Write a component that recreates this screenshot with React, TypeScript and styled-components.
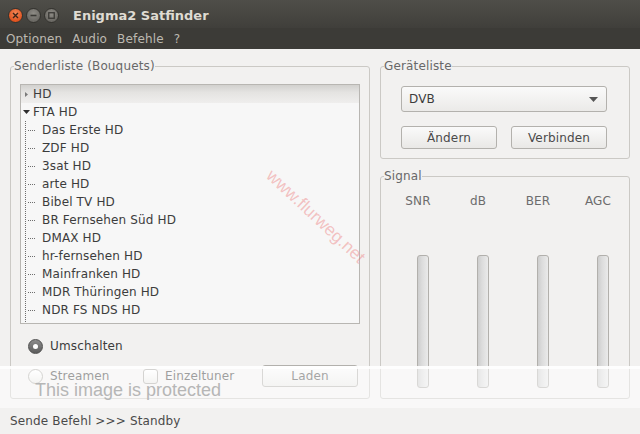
import React from "react";
import styled, { createGlobalStyle } from "styled-components";

const Global = createGlobalStyle`
  html, body { margin: 0; padding: 0; background: #f2f1f0; }
  body {
    width: 640px; height: 434px; overflow: hidden;
    font-family: "DejaVu Sans", "Noto Sans", sans-serif;
    font-size: 12px; letter-spacing: 0.15px; color: #3c3c3c;
  }
`;

const Window = styled.div`
  position: relative;
  width: 640px;
  height: 434px;
  background: #f2f1f0;
  display: flex;
  flex-direction: column;
  overflow: hidden;
`;

const TitleBar = styled.div`
  flex: none;
  height: 28px;
  box-sizing: border-box;
  padding: 2px 0 0 8px;
  display: flex;
  align-items: center;
  gap: 3px;
  background: linear-gradient(#4f4e49, #403f3b);
`;

const WinButton = styled.span<{ $kind: "close" | "min" | "max" }>`
  width: 15px;
  height: 15px;
  border-radius: 50%;
  display: flex;
  align-items: center;
  justify-content: center;
  box-sizing: border-box;
  border: 1px solid #33322e;
  background: ${(p) =>
    p.$kind === "close"
      ? "radial-gradient(circle at 50% 35%, #f58a5a, #e0531f 70%)"
      : "radial-gradient(circle at 50% 35%, #8e8c86, #6b6964 70%)"};
  margin-right: ${(p) => (p.$kind === "max" ? "11px" : "0")};
`;

const Title = styled.span`
  font-family: "DejaVu Sans", sans-serif;
  font-weight: bold;
  font-size: 13px;
  letter-spacing: 0;
  color: #dfdbd2;
`;

const MenuBar = styled.div`
  flex: none;
  height: 21px;
  padding-left: 1px;
  display: flex;
  align-items: center;
  background: #3c3b37;
`;

const MenuItem = styled.span`
  padding: 0 5px;
  color: #bdb9b1;
  font-size: 12px;
`;

const Content = styled.div`
  flex: none;
  display: flex;
  gap: 10px;
  padding: 10px;
`;

const Frame = styled.fieldset<{ $w: number; $h: number }>`
  margin: 0;
  min-width: 0;
  box-sizing: border-box;
  width: ${(p) => p.$w}px;
  height: ${(p) => p.$h}px;
  border: 1px solid #cbc9c5;
  border-radius: 3px;
  padding: 0;
`;

const FrameBody = styled.div<{ $pad: string }>`
  padding: ${(p) => p.$pad};
  display: flex;
  flex-direction: column;
  align-items: flex-start;
`;

const Legend = styled.legend`
  padding: 0;
  margin-left: 3px;
  font-size: 12px;
  line-height: 14px;
  color: #686868;
`;

const Tree = styled.div`
  width: 340px;
  height: 240px;
  box-sizing: border-box;
  border: 1px solid #b8b6b2;
  background: #f7f7f7;
  overflow: hidden;
  flex: none;
`;

const Row = styled.div<{ $selected?: boolean }>`
  height: 18px;
  display: flex;
  align-items: center;
  white-space: nowrap;
  color: #3c3c3c;
  background: ${(p) =>
    p.$selected ? "linear-gradient(#d2d1ce, #e4e3e1 40%, #efeeed)" : "transparent"};
`;

const Expander = styled.span`
  width: 12px;
  height: 18px;
  display: flex;
  align-items: center;
  justify-content: center;
  padding-right: 1px;
  box-sizing: border-box;
`;

const Guide = styled.svg`
  width: 21px;
  height: 18px;
  flex: none;
  display: block;
`;

const Options = styled.div`
  display: flex;
  flex-direction: column;
  gap: 10px;
  margin-top: 14px;
  padding-left: 8px;
`;

const OptionRow = styled.div`
  display: grid;
  grid-template-columns: 115px 119px 96px;
  align-items: center;
  height: 24px;
`;

const Choice = styled.label`
  display: flex;
  align-items: center;
  gap: 7px;
  height: 16px;
  color: #3c3c3c;
`;

const Radio = styled.span<{ $checked?: boolean }>`
  width: 15px;
  height: 15px;
  box-sizing: border-box;
  border-radius: 50%;
  display: flex;
  align-items: center;
  justify-content: center;
  border: 1px solid ${(p) => (p.$checked ? "#4f4f4f" : "#a9a7a3")};
  background: ${(p) =>
    p.$checked ? "linear-gradient(#8c8c8c, #5c5c5c)" : "linear-gradient(#ffffff, #e9e8e6)"};
`;

const Dot = styled.span`
  width: 5px;
  height: 5px;
  border-radius: 50%;
  background: #ffffff;
`;

const Check = styled.span`
  width: 15px;
  height: 15px;
  box-sizing: border-box;
  border-radius: 3px;
  border: 1px solid #a9a7a3;
  background: linear-gradient(#ffffff, #e9e8e6);
`;

const Button = styled.button<{ $h?: number }>`
  height: ${(p) => p.$h ?? 23}px;
  box-sizing: border-box;
  border: 1px solid #b3b1ad;
  border-radius: 3px;
  background: linear-gradient(#fafafa, #e9e8e6);
  font-family: "DejaVu Sans", sans-serif;
  font-size: 12px;
  letter-spacing: 0.15px;
  color: #4a4a4a;
  padding: 0;
`;

const RightCol = styled.div`
  display: flex;
  flex-direction: column;
  gap: 10px;
`;

const Combo = styled.div`
  width: 206px;
  height: 26px;
  box-sizing: border-box;
  border: 1px solid #b3b1ad;
  border-radius: 3px;
  background: linear-gradient(#fafafa, #ebeae8);
  display: flex;
  align-items: center;
  justify-content: space-between;
  padding: 0 8px 0 7px;
  color: #3c3c3c;
`;

const ButtonPair = styled.div`
  display: grid;
  grid-template-columns: 96px 96px;
  gap: 14px;
  margin-top: 14px;
`;

const SignalGrid = styled.div`
  display: grid;
  grid-template-columns: repeat(4, 60px);
`;

const SignalCol = styled.div`
  display: flex;
  flex-direction: column;
  align-items: flex-start;
`;

const SignalLabel = styled.span`
  width: 60px;
  text-align: center;
  line-height: 14px;
  color: #6c6c6c;
`;

const Bar = styled.div`
  margin: 47px 0 0 29px;
  width: 12px;
  height: 133px;
  box-sizing: border-box;
  border: 1px solid #b2b0ac;
  border-radius: 3px;
  background: linear-gradient(to right, #cdcdcd, #dcdcdc 40%, #eaeaea);
`;

const StatusBar = styled.div`
  flex: none;
  height: 25px;
  box-sizing: border-box;
  padding: 5px 0 0 10px;
  line-height: 14px;
  color: #4a4a4a;
`;

const Watermark = styled.span`
  position: absolute;
  left: 252px;
  top: 206px;
  transform: rotate(43deg);
  font-family: "Liberation Sans", sans-serif;
  font-size: 17.5px;
  letter-spacing: 0;
  color: rgba(235, 110, 110, 0.4);
  white-space: nowrap;
`;

const Band = styled.div`
  position: absolute;
  left: 0;
  right: 0;
  top: 366px;
  height: 42px;
  box-sizing: border-box;
  border-top: 3px solid rgba(255, 255, 255, 0.85);
  background: rgba(255, 255, 255, 0.5);
  padding: 11px 0 0 35px;
  font-family: "Liberation Sans", sans-serif;
  font-size: 18px;
  letter-spacing: 0;
  line-height: 20px;
  color: #b6b6b6;
`;

const channels = [
  "Das Erste HD",
  "ZDF HD",
  "3sat HD",
  "arte HD",
  "Bibel TV HD",
  "BR Fernsehen Süd HD",
  "DMAX HD",
  "hr-fernsehen HD",
  "Mainfranken HD",
  "MDR Thüringen HD",
  "NDR FS NDS HD",
];

const TreeGuide = () => (
  <Guide viewBox="0 0 21 18">
    <line x1="4.5" y1="0" x2="4.5" y2="18" stroke="#6e6e6e" strokeWidth="1" strokeDasharray="1 1" />
    <line x1="7" y1="9.5" x2="14" y2="9.5" stroke="#6e6e6e" strokeWidth="1" strokeDasharray="1 1" />
  </Guide>
);

export default function App() {
  return (
    <Window>
      <Global />
      <TitleBar>
        <WinButton $kind="close">
          <svg width="7" height="7" viewBox="0 0 7 7">
            <path d="M1 1 L6 6 M6 1 L1 6" stroke="#3b2418" strokeWidth="1.4" />
          </svg>
        </WinButton>
        <WinButton $kind="min">
          <svg width="7" height="7" viewBox="0 0 7 7">
            <path d="M0.5 3.5 H6.5" stroke="#3a3935" strokeWidth="1.6" />
          </svg>
        </WinButton>
        <WinButton $kind="max">
          <svg width="7" height="7" viewBox="0 0 7 7">
            <rect x="0.75" y="0.75" width="5.5" height="5.5" fill="none" stroke="#3a3935" strokeWidth="1.3" />
          </svg>
        </WinButton>
        <Title>Enigma2 Satfinder</Title>
      </TitleBar>
      <MenuBar>
        <MenuItem>Optionen</MenuItem>
        <MenuItem>Audio</MenuItem>
        <MenuItem>Befehle</MenuItem>
        <MenuItem>?</MenuItem>
      </MenuBar>
      <Content>
        <Frame $w={360} $h={340}>
          <Legend>Senderliste (Bouquets)</Legend>
          <FrameBody $pad="11px 9px 0 9px">
            <Tree>
              <Row $selected>
                <Expander>
                  <svg width="3" height="5" viewBox="0 0 3 5">
                    <path d="M0 0 L3 2.5 L0 5 Z" fill="#7a7a7a" />
                  </svg>
                </Expander>
                HD
              </Row>
              <Row>
                <Expander>
                  <svg width="7" height="4" viewBox="0 0 7 4">
                    <path d="M0 0 H7 L3.5 4 Z" fill="#2e2e2e" />
                  </svg>
                </Expander>
                FTA HD
              </Row>
              {channels.map((c) => (
                <Row key={c}>
                  <TreeGuide />
                  {c}
                </Row>
              ))}
              <Row>
                <TreeGuide />
              </Row>
            </Tree>
            <Options>
              <Choice>
                <Radio $checked>
                  <Dot />
                </Radio>
                Umschalten
              </Choice>
              <OptionRow>
                <Choice>
                  <Radio />
                  Streamen
                </Choice>
                <Choice>
                  <Check />
                  Einzeltuner
                </Choice>
                <Button $h={22}>Laden</Button>
              </OptionRow>
            </Options>
          </FrameBody>
        </Frame>
        <RightCol>
          <Frame $w={250} $h={100}>
            <Legend>Geräteliste</Legend>
            <FrameBody $pad="13px 21px 0 20px">
              <Combo>
                DVB
                <svg width="9" height="5" viewBox="0 0 9 5">
                  <path d="M0 0 H9 L4.5 5 Z" fill="#555555" />
                </svg>
              </Combo>
              <ButtonPair>
                <Button>Ändern</Button>
                <Button>Verbinden</Button>
              </ButtonPair>
            </FrameBody>
          </Frame>
          <Frame $w={250} $h={230}>
            <Legend>Signal</Legend>
            <FrameBody $pad="11px 0 0 7px">
              <SignalGrid>
                {["SNR", "dB", "BER", "AGC"].map((s) => (
                  <SignalCol key={s}>
                    <SignalLabel>{s}</SignalLabel>
                    <Bar />
                  </SignalCol>
                ))}
              </SignalGrid>
            </FrameBody>
          </Frame>
        </RightCol>
      </Content>
      <StatusBar>Sende Befehl &gt;&gt;&gt; Standby</StatusBar>
      <Watermark>www.flurweg.net</Watermark>
      <Band>This image is protected</Band>
    </Window>
  );
}
